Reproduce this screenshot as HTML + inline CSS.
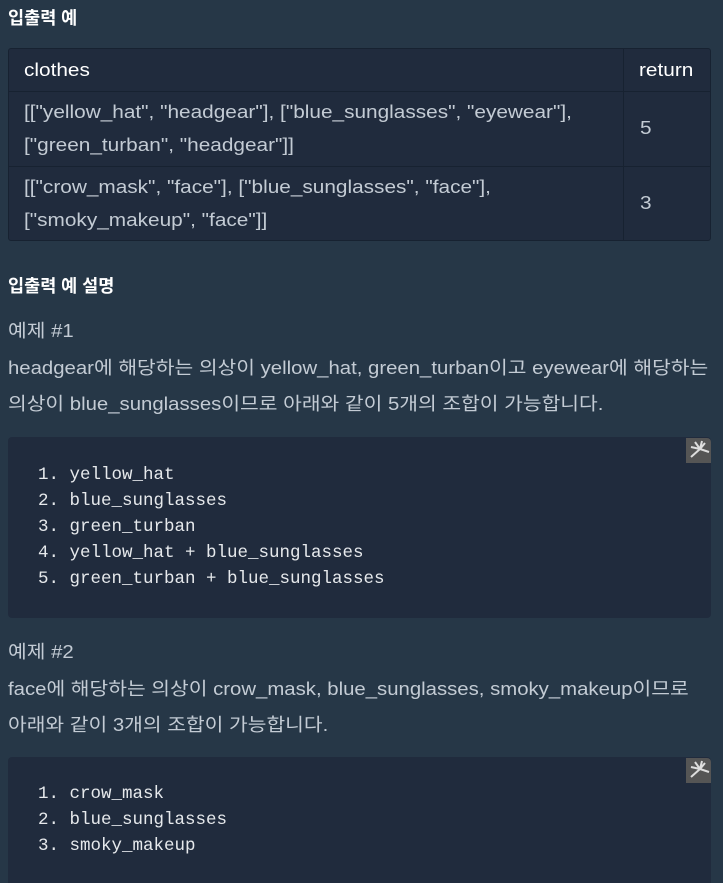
<!DOCTYPE html>
<html><head><meta charset="utf-8"><style>
*{margin:0;padding:0;box-sizing:border-box}
html,body{width:723px;height:883px;overflow:hidden}
body{background:#263747;position:relative;font-family:"Liberation Sans","Noto Sans CJK KR",sans-serif;color:#c3cbd4}
.a{position:absolute;white-space:nowrap;transform-origin:0 0}
h{position:absolute;color:#fff;font-size:17.5px;font-weight:bold;white-space:nowrap}
.p{font-size:18px;line-height:36px;transform:scaleX(1.13)}
.tbl{position:absolute;left:8px;top:48px;width:703px;height:193px;background:#202b3d;border:1px solid #172231;border-radius:3px}
.hl{position:absolute;left:0;right:0;height:1px;background:#172231}
.vl{position:absolute;top:0;bottom:0;left:614px;width:1px;background:#172231}
.c{font-size:18px;line-height:33px;transform:scaleX(1.155)}
.code{position:absolute;left:8px;width:703px;background:#202b3d;border-radius:4px;font-family:"Liberation Mono","DejaVu Sans Mono",monospace;font-size:17.5px;line-height:26px;color:#e6e9ec;padding-left:30px;white-space:pre}
.ic{position:absolute;right:0;top:1px;width:25px;height:25px;background:#555;border-radius:0 4px 0 0}
</style></head><body>
<h style="left:8px;top:5px">입출력 예</h>
<div class="tbl">
<div class="hl" style="top:42px"></div><div class="hl" style="top:117px"></div><div class="vl"></div>
<div class="a c" style="left:15px;top:5px;color:#fff">clothes</div>
<div class="a c" style="left:630px;top:5px;color:#fff">return</div>
<div class="a c" style="left:15px;top:47px">[["yellow_hat", "headgear"], ["blue_sunglasses", "eyewear"],<br>["green_turban", "headgear"]]</div>
<div class="a c" style="left:631px;top:63px">5</div>
<div class="a c" style="left:15px;top:122px">[["crow_mask", "face"], ["blue_sunglasses", "face"],<br>["smoky_makeup", "face"]]</div>
<div class="a c" style="left:631px;top:138px">3</div>
</div>
<h style="left:8px;top:273px">입출력 예 설명</h>
<div class="a p" style="left:8px;top:313px">예제 #1</div>
<div class="a p" style="left:8px;top:350px">headgear에 해당하는 의상이 yellow_hat, green_turban이고 eyewear에 해당하는<br>의상이 blue_sunglasses이므로 아래와 같이 5개의 조합이 가능합니다.</div>
<div class="code" style="top:437px;height:181px;padding-top:25px">1. yellow_hat
2. blue_sunglasses
3. green_turban
4. yellow_hat + blue_sunglasses
5. green_turban + blue_sunglasses<div class="ic"><svg width="25" height="25"><path d="M5 19L14 11M14 11L9 4M14 11L16 3M14 11L23 14M14 11L19 5M14 11L5 9" stroke="#ddd" stroke-width="2" fill="none"/></svg></div></div>
<div class="a p" style="left:8px;top:634px">예제 #2</div>
<div class="a p" style="left:8px;top:671px">face에 해당하는 의상이 crow_mask, blue_sunglasses, smoky_makeup이므로<br>아래와 같이 3개의 조합이 가능합니다.</div>
<div class="code" style="top:757px;height:140px;padding-top:24px">1. crow_mask
2. blue_sunglasses
3. smoky_makeup<div class="ic"><svg width="25" height="25"><path d="M5 19L14 11M14 11L9 4M14 11L16 3M14 11L23 14M14 11L19 5M14 11L5 9" stroke="#ddd" stroke-width="2" fill="none"/></svg></div></div>
</body></html>
